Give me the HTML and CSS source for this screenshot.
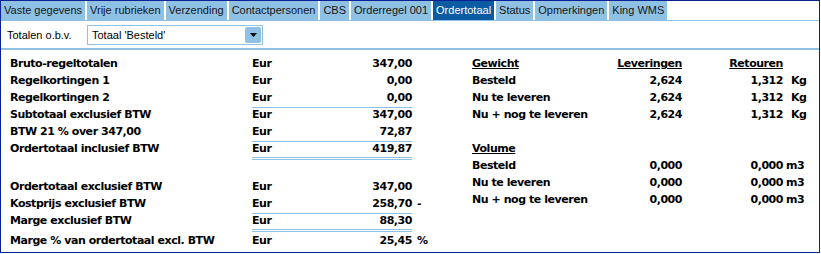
FILE: index.html
```html
<!DOCTYPE html>
<html>
<head>
<meta charset="utf-8">
<link rel="stylesheet" href="styles.css">
</head>
<body>
<div class="window">
  <div class="tabs">
    <div class="tab">Vaste gegevens</div>
    <div class="tab">Vrije rubrieken</div>
    <div class="tab">Verzending</div>
    <div class="tab">Contactpersonen</div>
    <div class="tab">CBS</div>
    <div class="tab">Orderregel 001</div>
    <div class="tab active">Ordertotaal</div>
    <div class="tab">Status</div>
    <div class="tab">Opmerkingen</div>
    <div class="tab">King WMS</div>
  </div>
  <div class="filter">
    <span class="filter-label">Totalen o.b.v.</span>
    <div class="select">
      <span class="select-text">Totaal 'Besteld'</span>
      <span class="select-btn"><svg width="7" height="4" viewBox="0 0 7 4"><polygon points="0,0 7,0 3.5,4" fill="#000"/></svg></span>
    </div>
  </div>
  <div class="content">
    <div class="totals">
      <div class="group">
        <div class="row"><span>Bruto-regeltotalen</span><span class="val"><span>Eur</span><span>347,00</span></span><span></span></div>
        <div class="row"><span>Regelkortingen 1</span><span class="val"><span>Eur</span><span>0,00</span></span><span></span></div>
        <div class="row"><span>Regelkortingen 2</span><span class="val"><span>Eur</span><span>0,00</span></span><span></span></div>
        <div class="row"><span>Subtotaal exclusief BTW</span><span class="val rule"><span>Eur</span><span>347,00</span></span><span></span></div>
        <div class="row"><span>BTW 21 % over 347,00</span><span class="val"><span>Eur</span><span>72,87</span></span><span></span></div>
        <div class="row"><span>Ordertotaal inclusief BTW</span><span class="val rule"><span>Eur</span><span>419,87</span></span><span></span></div>
        <div class="dbl"></div>
      </div>
      <div class="group g2">
        <div class="row"><span>Ordertotaal exclusief BTW</span><span class="val"><span>Eur</span><span>347,00</span></span><span></span></div>
        <div class="row"><span>Kostprijs exclusief BTW</span><span class="val"><span>Eur</span><span>258,70</span></span><span class="suffix">-</span></div>
        <div class="row"><span>Marge exclusief BTW</span><span class="val rule"><span>Eur</span><span>88,30</span></span><span></span></div>
        <div class="dbl"></div>
        <div class="row"><span>Marge % van ordertotaal excl. BTW</span><span class="val"><span>Eur</span><span>25,45</span></span><span class="suffix">%</span></div>
      </div>
    </div>
    <div class="stats">
      <span class="hd">Gewicht</span><span class="num"><span class="hd">Leveringen</span></span><span class="num"><span class="hd">Retouren</span></span><span></span>
      <span>Besteld</span><span class="num">2,624</span><span class="num">1,312</span><span class="unit kg">Kg</span>
      <span>Nu te leveren</span><span class="num">2,624</span><span class="num">1,312</span><span class="unit kg">Kg</span>
      <span>Nu + nog te leveren</span><span class="num">2,624</span><span class="num">1,312</span><span class="unit kg">Kg</span>
      <span class="blank"></span>
      <span class="hd">Volume</span><span></span><span></span><span></span>
      <span>Besteld</span><span class="num">0,000</span><span class="num">0,000</span><span class="unit">m3</span>
      <span>Nu te leveren</span><span class="num">0,000</span><span class="num">0,000</span><span class="unit">m3</span>
      <span>Nu + nog te leveren</span><span class="num">0,000</span><span class="num">0,000</span><span class="unit">m3</span>
    </div>
  </div>
</div>
</body>
</html>
```

FILE: styles.css
```css
* { box-sizing: border-box; }

body {
  margin: 0;
  background: #fff;
  font-family: "Liberation Sans", Arial, sans-serif;
  font-size: 11px;
  color: #000;
}

.window {
  width: 820px;
  height: 253px;
  border: 1px solid #0b2196;
  overflow: hidden;
}

.tabs {
  display: flex;
  gap: 2px;
  height: 20px;
  border-bottom: 1px solid #8fc1e5;
}

.tab {
  background: #8fc1e5;
  padding: 0 3px;
  line-height: 19px;
  color: #151515;
  white-space: nowrap;
}

.tab.active {
  background: #0b5ba3;
  color: #fff;
}

.filter {
  display: flex;
  align-items: center;
  height: 29px;
  padding-left: 6px;
  border-bottom: 2px solid #8fc1e5;
}

.filter-label {
  width: 80px;
}

.select {
  display: flex;
  align-items: center;
  justify-content: space-between;
  width: 176px;
  height: 20px;
  border: 1px solid #8fc1e5;
  padding: 0 1px 0 4px;
}

.select-btn {
  width: 16px;
  height: 16px;
  background: #8fc1e5;
  border-radius: 2px;
  display: flex;
  align-items: center;
  justify-content: center;
}

.content {
  display: flex;
  padding-top: 5px;
  font-family: "DejaVu Sans", Verdana, sans-serif;
  font-weight: bold;
  letter-spacing: -0.45px;
}

.totals {
  width: 471px;
  padding-left: 9px;
}

.row {
  display: grid;
  grid-template-columns: 242px 160px auto;
  height: 17px;
  line-height: 17px;
  white-space: nowrap;
}

.val {
  display: flex;
  justify-content: space-between;
}

.val.rule {
  background: linear-gradient(#8fc1e5, #8fc1e5) no-repeat 0 1px / 100% 1px;
}

.suffix {
  padding-left: 5px;
}

.dbl {
  margin-left: 242px;
  width: 160px;
  height: 3px;
  border-top: 1px solid #8fc1e5;
  border-bottom: 1px solid #8fc1e5;
}

.g2 {
  margin-top: 18px;
}

.stats {
  display: grid;
  grid-template-columns: 128px 82px 101px auto;
  grid-auto-rows: 17px;
  line-height: 17px;
  white-space: nowrap;
}

.num {
  text-align: right;
}

.hd {
  text-decoration: underline;
}

.blank {
  grid-column: 1 / -1;
}

.unit {
  padding-left: 3px;
}

.unit.kg {
  padding-left: 8px;
}
```
